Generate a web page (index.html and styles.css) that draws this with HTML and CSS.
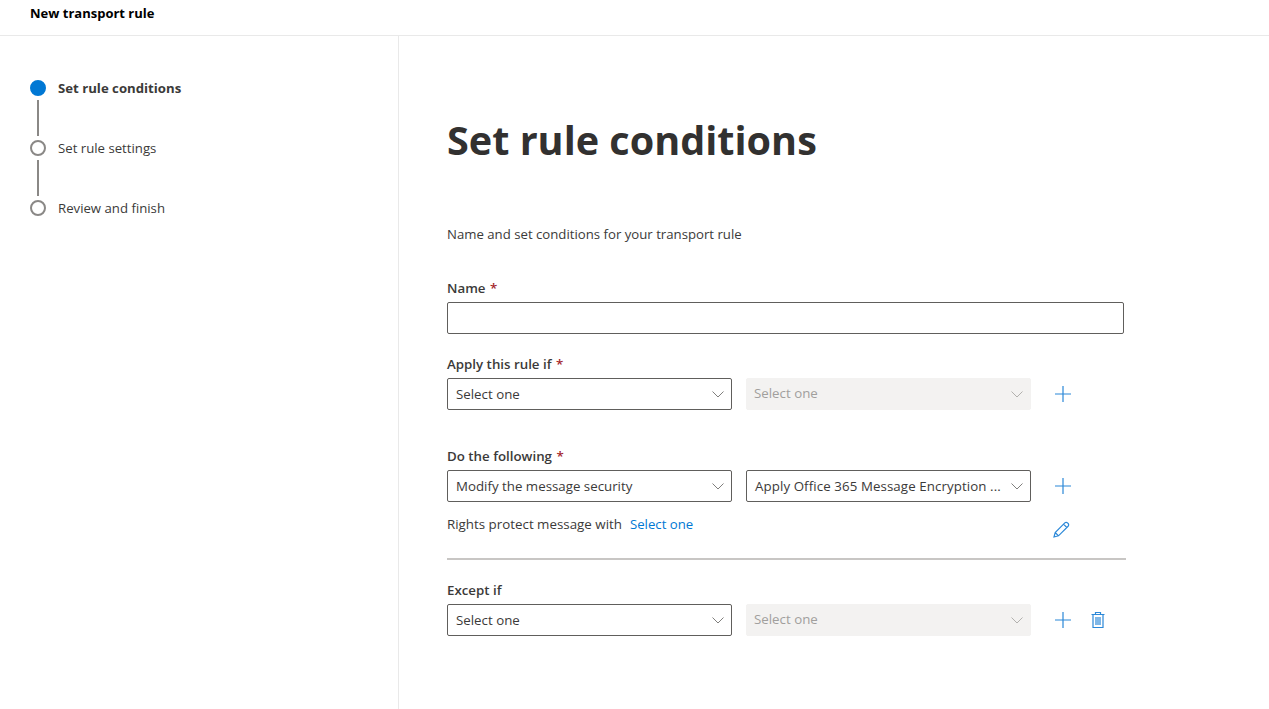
FILE: index.html
```html
<!DOCTYPE html>
<html lang="en">
<head>
  <meta charset="UTF-8" />
  <meta name="viewport" content="width=device-width, initial-scale=1.0"/>
  <title>New transport rule</title>
  <link rel="stylesheet" href="styles.css">
</head>
<body>
  <header class="top-bar">New transport rule</header>
  <div class="wizard">
    <nav class="steps">
      <div class="step active"><span class="dot"></span><span class="step-label">Set rule conditions</span></div>
      <div class="step-line"></div>
      <div class="step"><span class="dot"></span><span class="step-label">Set rule settings</span></div>
      <div class="step-line"></div>
      <div class="step"><span class="dot"></span><span class="step-label">Review and finish</span></div>
    </nav>
    <main class="content">
      <h1>Set rule conditions</h1>
      <p class="intro">Name and set conditions for your transport rule</p>

      <label class="field-label name-label">Name <span class="req">*</span></label>
      <div class="text-input"></div>

      <label class="field-label apply-label">Apply this rule if <span class="req">*</span></label>
      <div class="rule-row">
        <div class="select"><span class="select-text">Select one</span><svg class="chev" viewBox="0 0 12 7"><path d="M.5.5 6 6l5.500-5.500"/></svg></div>
        <div class="select disabled"><span class="select-text">Select one</span><svg class="chev" viewBox="0 0 12 7"><path d="M.5.5 6 6l5.500-5.500"/></svg></div>
        <svg class="icon plus" viewBox="0 0 16 16"><path d="M8 0v16M0 8h16"/></svg>
      </div>

      <label class="field-label do-label">Do the following <span class="req">*</span></label>
      <div class="rule-row">
        <div class="select"><span class="select-text">Modify the message security</span><svg class="chev" viewBox="0 0 12 7"><path d="M.5.5 6 6l5.500-5.500"/></svg></div>
        <div class="select"><span class="select-text long">Apply Office 365 Message Encryption ...</span><svg class="chev" viewBox="0 0 12 7"><path d="M.5.5 6 6l5.500-5.500"/></svg></div>
        <svg class="icon plus" viewBox="0 0 16 16"><path d="M8 0v16M0 8h16"/></svg>
      </div>
      <div class="rights-row">
        <span class="rights-text">Rights protect message with</span>
        <a class="link" href="#">Select one</a>
        <svg class="icon pencil" viewBox="0 0 17 17"><path d="M1 16l1.200-4.500L11.800 1.900a1.900 1.900 0 0 1 2.700 0l.6.6a1.900 1.900 0 0 1 0 2.700L5.500 14.800zM2.200 11.500l3.300 3.300M10.500 3.200l3.300 3.300"/></svg>
      </div>
      <hr class="divider">

      <label class="field-label">Except if</label>
      <div class="rule-row">
        <div class="select"><span class="select-text">Select one</span><svg class="chev" viewBox="0 0 12 7"><path d="M.5.5 6 6l5.500-5.500"/></svg></div>
        <div class="select disabled"><span class="select-text">Select one</span><svg class="chev" viewBox="0 0 12 7"><path d="M.5.5 6 6l5.500-5.500"/></svg></div>
        <svg class="icon plus" viewBox="0 0 16 16"><path d="M8 0v16M0 8h16"/></svg>
        <svg class="icon trash" viewBox="0 0 14 16"><path d="M.5 2.500h13M4.500 2.500V.5h5v2M2 2.500v13h10v-13M5 5v8M7 5v8M9 5v8"/></svg>
      </div>
    </main>
  </div>
</body>
</html>
```

FILE: styles.css
```css
html, body {
  height: 100%;
}

body {
  font-family: 'Open Sans', 'Noto Sans', sans-serif;
  font-size: 13.2px;
  color: #3b3a39;
  background-color: #fff;
  margin: 0;
  padding: 0;
  display: flex;
  flex-direction: column;
  overflow: hidden;
}

.top-bar {
  height: 35px;
  padding-left: 30px;
  font-size: 13px;
  font-weight: 700;
  line-height: 27px;
  color: #000;
  border-bottom: 1px solid #e9e9e9;
  flex: none;
}

.wizard {
  display: flex;
  flex: 1;
}

.steps {
  width: 399px;
  flex: none;
  box-sizing: border-box;
  padding: 44px 0 0 30px;
  border-right: 1px solid #e9e9e9;
}

.step {
  display: flex;
  align-items: center;
  height: 16px;
  gap: 12px;
}

.dot {
  width: 16px;
  height: 16px;
  box-sizing: border-box;
  border: 2px solid #8a8886;
  border-radius: 50%;
  flex: none;
}

.active .dot {
  background-color: #0078d4;
  border-color: #0078d4;
}

.step-label {
  line-height: 16px;
}

.active .step-label {
  font-weight: 700;
}

.step-line {
  width: 2px;
  height: 36px;
  margin: 4px 0 4px 7px;
  background-color: #8a8886;
}

.content {
  flex: 1;
  padding: 0 0 0 48px;
}

h1 {
  margin: 77px 0 0;
  font-size: 39.6px;
  line-height: 54px;
  font-weight: 700;
  color: #323130;
}

.intro {
  margin: 57px 0 0;
  line-height: 20px;
}

.field-label {
  display: block;
  font-size: 13.3px;
  font-weight: 600;
  line-height: 20px;
  height: 20px;
}

.name-label {
  margin-top: 34px;
  margin-bottom: 4px;
}

.apply-label {
  margin-top: 20px;
}

.do-label {
  margin-top: 36px;
}

.req {
  color: #a4262c;
  margin-left: 1px;
}

.text-input {
  width: 677px;
  height: 32px;
  box-sizing: border-box;
  border: 1px solid #605e5c;
  border-radius: 2px;
}

.rule-row {
  display: flex;
  align-items: center;
  margin-top: 4px;
}

.select {
  width: 285px;
  height: 32px;
  box-sizing: border-box;
  margin-right: 14px;
  padding: 0 7px 0 8px;
  display: flex;
  align-items: center;
  justify-content: space-between;
  border: 1px solid #605e5c;
  border-radius: 2px;
}

.select-text {
  font-size: 13.3px;
  white-space: nowrap;
  line-height: 30px;
}

.select-text.long {
  letter-spacing: .09px;
}

.select.disabled {
  background-color: #f3f2f1;
  border-color: #f3f2f1;
  color: #a19f9d;
  padding-left: 7px;
}

.disabled .select-text {
  line-height: 28px;
  height: 30px;
}

.chev {
  width: 12px;
  height: 7px;
  fill: none;
  stroke: #605e5c;
  stroke-width: .8;
  flex: none;
}

.disabled .chev {
  stroke: #a19f9d;
}

.icon {
  fill: none;
  stroke: #2b88d8;
  stroke-width: 1.2;
  flex: none;
}

.plus {
  width: 16px;
  height: 16px;
  margin-left: 10px;
}

.trash {
  width: 14px;
  height: 16px;
  margin-left: 20px;
}

.rights-row {
  display: flex;
  align-items: flex-start;
  width: 677px;
  margin-top: 12px;
  height: 32px;
  line-height: 20px;
}

.rights-text {
  font-size: 13.35px;
  margin-right: 8px;
}

.link {
  color: #0078d4;
  text-decoration: none;
}

.pencil {
  width: 17px;
  height: 17px;
  margin: 7px 0 0 auto;
  margin-right: 54px;
}

.divider {
  width: 679px;
  margin: 12px 0 20px;
  border: 0;
  border-top: 2px solid #c8c6c4;
}
```
